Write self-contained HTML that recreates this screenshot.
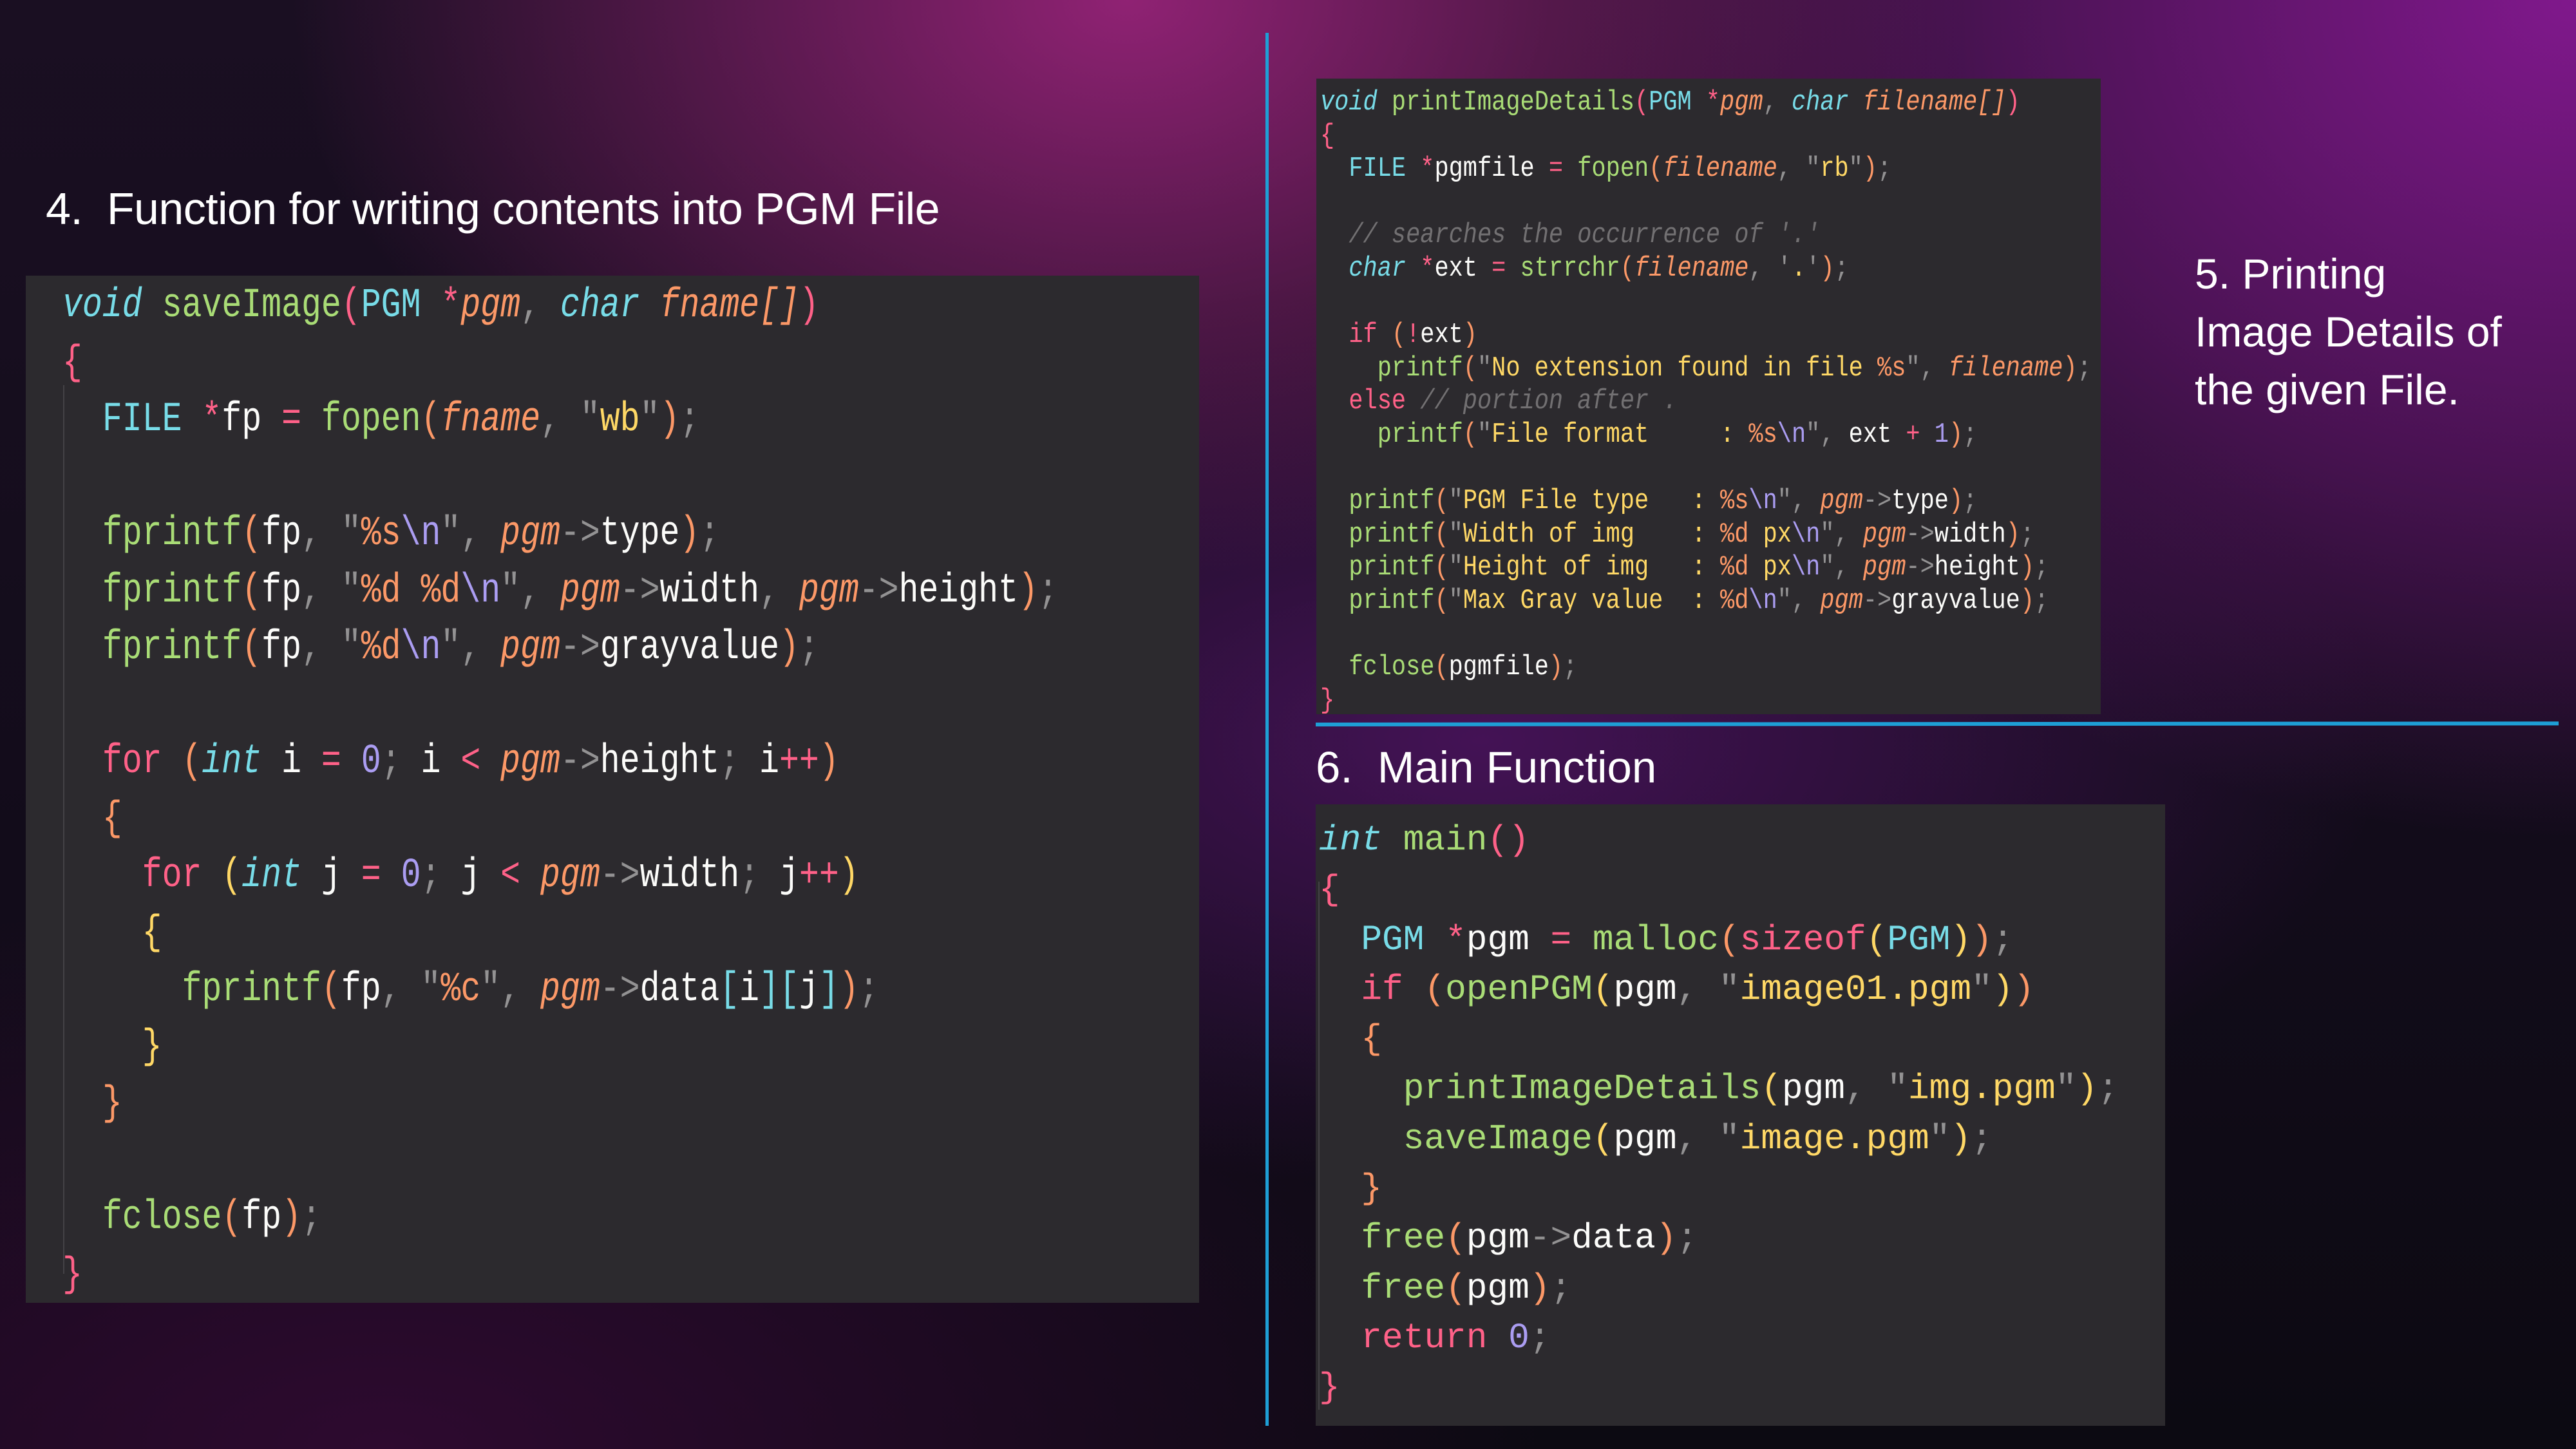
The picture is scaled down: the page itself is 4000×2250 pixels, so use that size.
<!DOCTYPE html>
<html><head><meta charset="utf-8"><style>
html,body{margin:0;padding:0}
body{width:4000px;height:2250px;position:relative;overflow:hidden;
background:
radial-gradient(ellipse 1300px 900px at 1750px 0px, rgba(150,35,120,0.95), rgba(150,35,120,0) 100%),
radial-gradient(ellipse 1600px 1300px at 4000px 0px, rgba(128,24,140,1), rgba(110,22,120,0.6) 55%, rgba(70,15,80,0) 100%),
radial-gradient(ellipse 1400px 700px at 2300px 1150px, rgba(80,20,100,0.8), rgba(80,20,100,0) 100%),
radial-gradient(ellipse 1800px 900px at 600px 2250px, rgba(60,10,60,0.7), rgba(60,10,60,0) 100%),
linear-gradient(180deg,#1a0f22 0%,#120c1a 60%,#0c0a12 100%);
font-family:"Liberation Sans",sans-serif;color:#fff}
.t{position:absolute;white-space:pre;color:#fff;font-family:"Liberation Sans",sans-serif}
.panel{position:absolute;background:#2c2a2e}
.code{position:absolute;left:0;top:0;white-space:pre;font-family:"Liberation Mono",monospace;transform-origin:0 0;color:#fcfcfa}
.c{color:#78dce8}.ci{color:#78dce8;font-style:italic}.f{color:#a9dc76}.o{color:#fc9867;font-style:italic}
.oo{color:#fc9867}.p{color:#ff6188}.y{color:#ffd866}.g{color:#939293}.v{color:#ab9df2}.cm{color:#727072;font-style:italic}
.guide{position:absolute;width:2px;background:#444246}
</style></head><body>

<div class="t" style="left:71px;top:284px;font-size:70px;letter-spacing:-0.6px">4.  Function for writing contents into PGM File</div>

<div class="panel" style="left:40px;top:428px;width:1822px;height:1595px">
<div class="guide" style="left:58px;top:170px;height:1380px"></div>
<div class="code" style="left:57px;top:3px;font-size:64px;line-height:88.5px;transform:scaleX(0.805)"><span class="ci">void</span> <span class="f">saveImage</span><span class="p">(</span><span class="c">PGM</span> <span class="p">*</span><span class="o">pgm</span><span class="g">,</span> <span class="ci">char</span> <span class="o">fname[]</span><span class="p">)</span>
<span class="p">{</span>
  <span class="c">FILE</span> <span class="p">*</span>fp <span class="p">=</span> <span class="f">fopen</span><span class="oo">(</span><span class="o">fname</span><span class="g">,</span> <span class="g">"</span><span class="y">wb</span><span class="g">"</span><span class="oo">)</span><span class="g">;</span>

  <span class="f">fprintf</span><span class="oo">(</span>fp<span class="g">,</span> <span class="g">"</span><span class="oo">%s</span><span class="v">\n</span><span class="g">"</span><span class="g">,</span> <span class="o">pgm</span><span class="g">-&gt;</span>type<span class="oo">)</span><span class="g">;</span>
  <span class="f">fprintf</span><span class="oo">(</span>fp<span class="g">,</span> <span class="g">"</span><span class="oo">%d %d</span><span class="v">\n</span><span class="g">"</span><span class="g">,</span> <span class="o">pgm</span><span class="g">-&gt;</span>width<span class="g">,</span> <span class="o">pgm</span><span class="g">-&gt;</span>height<span class="oo">)</span><span class="g">;</span>
  <span class="f">fprintf</span><span class="oo">(</span>fp<span class="g">,</span> <span class="g">"</span><span class="oo">%d</span><span class="v">\n</span><span class="g">"</span><span class="g">,</span> <span class="o">pgm</span><span class="g">-&gt;</span>grayvalue<span class="oo">)</span><span class="g">;</span>

  <span class="p">for</span> <span class="oo">(</span><span class="ci">int</span> i <span class="p">=</span> <span class="v">0</span><span class="g">;</span> i <span class="p">&lt;</span> <span class="o">pgm</span><span class="g">-&gt;</span>height<span class="g">;</span> i<span class="p">++</span><span class="oo">)</span>
  <span class="oo">{</span>
    <span class="p">for</span> <span class="y">(</span><span class="ci">int</span> j <span class="p">=</span> <span class="v">0</span><span class="g">;</span> j <span class="p">&lt;</span> <span class="o">pgm</span><span class="g">-&gt;</span>width<span class="g">;</span> j<span class="p">++</span><span class="y">)</span>
    <span class="y">{</span>
      <span class="f">fprintf</span><span class="oo">(</span>fp<span class="g">,</span> <span class="g">"</span><span class="oo">%c</span><span class="g">"</span><span class="g">,</span> <span class="o">pgm</span><span class="g">-&gt;</span>data<span class="c">[</span>i<span class="c">][</span>j<span class="c">]</span><span class="oo">)</span><span class="g">;</span>
    <span class="y">}</span>
  <span class="oo">}</span>

  <span class="f">fclose</span><span class="oo">(</span>fp<span class="oo">)</span><span class="g">;</span>
<span class="p">}</span></div>
</div>

<div style="position:absolute;left:1965px;top:51px;width:5px;height:2163px;background:#1e9fd6"></div>
<div style="position:absolute;left:2043px;top:1122px;width:1930px;height:6px;background:#1e9fd6;transform:rotate(-0.05deg);transform-origin:0 0"></div>

<div class="panel" style="left:2044px;top:122px;width:1218px;height:987px">
<div class="code" style="left:6px;top:12px;font-size:44px;line-height:51.6px;transform:scaleX(0.84)"><span class="ci">void</span> <span class="f">printImageDetails</span><span class="p">(</span><span class="c">PGM</span> <span class="p">*</span><span class="o">pgm</span><span class="g">,</span> <span class="ci">char</span> <span class="o">filename[]</span><span class="p">)</span>
<span class="p">{</span>
  <span class="c">FILE</span> <span class="p">*</span>pgmfile <span class="p">=</span> <span class="f">fopen</span><span class="oo">(</span><span class="o">filename</span><span class="g">,</span> <span class="g">"</span><span class="y">rb</span><span class="g">"</span><span class="oo">)</span><span class="g">;</span>

  <span class="cm">// searches the occurrence of '.'</span>
  <span class="ci">char</span> <span class="p">*</span>ext <span class="p">=</span> <span class="f">strrchr</span><span class="oo">(</span><span class="o">filename</span><span class="g">,</span> <span class="g">'</span><span class="y">.</span><span class="g">'</span><span class="oo">)</span><span class="g">;</span>

  <span class="p">if</span> <span class="oo">(</span><span class="p">!</span>ext<span class="oo">)</span>
    <span class="f">printf</span><span class="oo">(</span><span class="g">"</span><span class="y">No extension found in file </span><span class="oo">%s</span><span class="g">"</span><span class="g">,</span> <span class="o">filename</span><span class="oo">)</span><span class="g">;</span>
  <span class="p">else</span> <span class="cm">// portion after .</span>
    <span class="f">printf</span><span class="oo">(</span><span class="g">"</span><span class="y">File format     : </span><span class="oo">%s</span><span class="v">\n</span><span class="g">"</span><span class="g">,</span> ext <span class="p">+</span> <span class="v">1</span><span class="oo">)</span><span class="g">;</span>

  <span class="f">printf</span><span class="oo">(</span><span class="g">"</span><span class="y">PGM File type   : </span><span class="oo">%s</span><span class="v">\n</span><span class="g">"</span><span class="g">,</span> <span class="o">pgm</span><span class="g">-&gt;</span>type<span class="oo">)</span><span class="g">;</span>
  <span class="f">printf</span><span class="oo">(</span><span class="g">"</span><span class="y">Width of img    : </span><span class="oo">%d</span><span class="y"> px</span><span class="v">\n</span><span class="g">"</span><span class="g">,</span> <span class="o">pgm</span><span class="g">-&gt;</span>width<span class="oo">)</span><span class="g">;</span>
  <span class="f">printf</span><span class="oo">(</span><span class="g">"</span><span class="y">Height of img   : </span><span class="oo">%d</span><span class="y"> px</span><span class="v">\n</span><span class="g">"</span><span class="g">,</span> <span class="o">pgm</span><span class="g">-&gt;</span>height<span class="oo">)</span><span class="g">;</span>
  <span class="f">printf</span><span class="oo">(</span><span class="g">"</span><span class="y">Max Gray value  : </span><span class="oo">%d</span><span class="v">\n</span><span class="g">"</span><span class="g">,</span> <span class="o">pgm</span><span class="g">-&gt;</span>grayvalue<span class="oo">)</span><span class="g">;</span>

  <span class="f">fclose</span><span class="oo">(</span>pgmfile<span class="oo">)</span><span class="g">;</span>
<span class="p">}</span></div>
</div>

<div class="t" style="left:3408px;top:380px;font-size:66px;line-height:90px">5. Printing
Image Details of
the given File.</div>

<div class="t" style="left:2043px;top:1152px;font-size:69px">6.  Main Function</div>

<div class="panel" style="left:2043px;top:1249px;width:1319px;height:965px">
<div class="guide" style="left:4px;top:120px;height:820px"></div>
<div class="code" style="left:5px;top:17px;font-size:55px;line-height:77.3px;transform:scaleX(0.99)"><span class="ci">int</span> <span class="f">main</span><span class="p">()</span>
<span class="p">{</span>
  <span class="c">PGM</span> <span class="p">*</span>pgm <span class="p">=</span> <span class="f">malloc</span><span class="oo">(</span><span class="p">sizeof</span><span class="y">(</span><span class="c">PGM</span><span class="y">)</span><span class="oo">)</span><span class="g">;</span>
  <span class="p">if</span> <span class="oo">(</span><span class="f">openPGM</span><span class="y">(</span>pgm<span class="g">,</span> <span class="g">"</span><span class="y">image01.pgm</span><span class="g">"</span><span class="y">)</span><span class="oo">)</span>
  <span class="oo">{</span>
    <span class="f">printImageDetails</span><span class="y">(</span>pgm<span class="g">,</span> <span class="g">"</span><span class="y">img.pgm</span><span class="g">"</span><span class="y">)</span><span class="g">;</span>
    <span class="f">saveImage</span><span class="y">(</span>pgm<span class="g">,</span> <span class="g">"</span><span class="y">image.pgm</span><span class="g">"</span><span class="y">)</span><span class="g">;</span>
  <span class="oo">}</span>
  <span class="f">free</span><span class="oo">(</span>pgm<span class="g">-&gt;</span>data<span class="oo">)</span><span class="g">;</span>
  <span class="f">free</span><span class="oo">(</span>pgm<span class="oo">)</span><span class="g">;</span>
  <span class="p">return</span> <span class="v">0</span><span class="g">;</span>
<span class="p">}</span></div>
</div>

</body></html>
